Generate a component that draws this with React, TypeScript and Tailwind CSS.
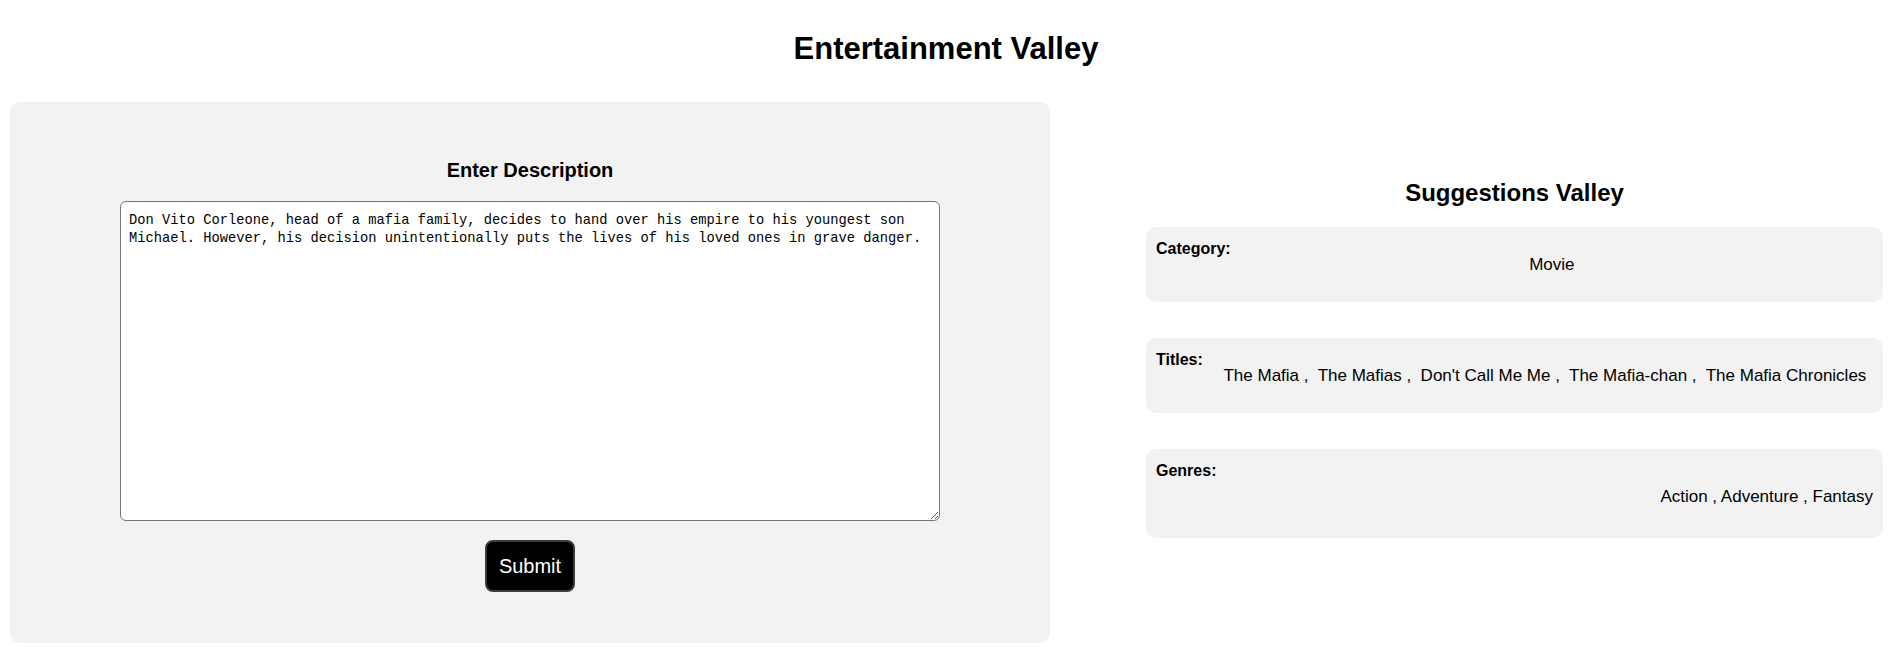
const FONT = "font-['Comic_Sans_MS','Liberation_Sans',sans-serif]";

const TITLES = ["The Mafia", "The Mafias", "Don't Call Me Me", "The Mafia-chan", "The Mafia Chronicles"];
const GENRES = ["Action", "Adventure", "Fantasy"];

const DESCRIPTION =
  "Don Vito Corleone, head of a mafia family, decides to hand over his empire to his youngest son Michael. However, his decision unintentionally puts the lives of his loved ones in grave danger.";

function Label({ children }: { children: React.ReactNode }) {
  return <h4 className="shrink-0 text-[16px] font-bold leading-[18px] text-black">{children}</h4>;
}

export default function App() {
  return (
    <div className={`min-h-screen w-full bg-white text-black ${FONT}`}>
      <h1 className="pt-[29px] text-center text-[31px] font-bold leading-[40px]">Entertainment Valley</h1>

      <div className="mt-[33px] flex items-start gap-[96px] pl-[10px] pr-[9px]">
        {/* description form */}
        <div className="flex w-[1040px] shrink-0 flex-col items-center rounded-[10px] bg-[#f2f2f2] pb-[51px] pt-[56px]">
          <h3 className="text-[20px] font-bold leading-[24px]">Enter Description</h3>
          <textarea
            defaultValue={DESCRIPTION}
            className="mt-[19px] h-[320px] w-[820px] rounded-[6px] border border-[#767676] bg-white px-[8px] pt-[10px] font-['Liberation_Mono',monospace] text-[13.75px] leading-[18px] text-black outline-none"
          />
          <button className="mt-[19px] h-[52px] w-[90px] rounded-[8px] border-2 border-[#3c3c3c] bg-black text-[20px] text-white">
            Submit
          </button>
        </div>

        {/* suggestions */}
        <div className="flex flex-1 flex-col pt-[76px]">
          <h2 className="text-center text-[24px] font-bold leading-[30px]">Suggestions Valley</h2>
          <div className="mt-[19px] flex flex-col gap-[36px]">
            <div className="flex rounded-[10px] bg-[#f2f2f2] pb-[27px] pl-[10px] pr-[10px] pt-[13px]">
              <Label>Category:</Label>
              <p className="mt-[15px] flex-1 text-center text-[17px] leading-[20px]">Movie</p>
            </div>
            <div className="flex rounded-[10px] bg-[#f2f2f2] pb-[27px] pl-[10px] pr-[10px] pt-[13px]">
              <Label>Titles:</Label>
              <p className="mt-[15px] flex-1 pl-[14px] text-center text-[17px] leading-[20px]">
                {TITLES.join(" ,\u00a0 ")}
              </p>
            </div>
            <div className="flex flex-col rounded-[10px] bg-[#f2f2f2] pb-[31px] pl-[10px] pr-[10px] pt-[13px]">
              <Label>Genres:</Label>
              <p className="mt-[7px] text-right text-[17px] leading-[20px]">{GENRES.join(" , ")}</p>
            </div>
          </div>
        </div>
      </div>
    </div>
  );
}
